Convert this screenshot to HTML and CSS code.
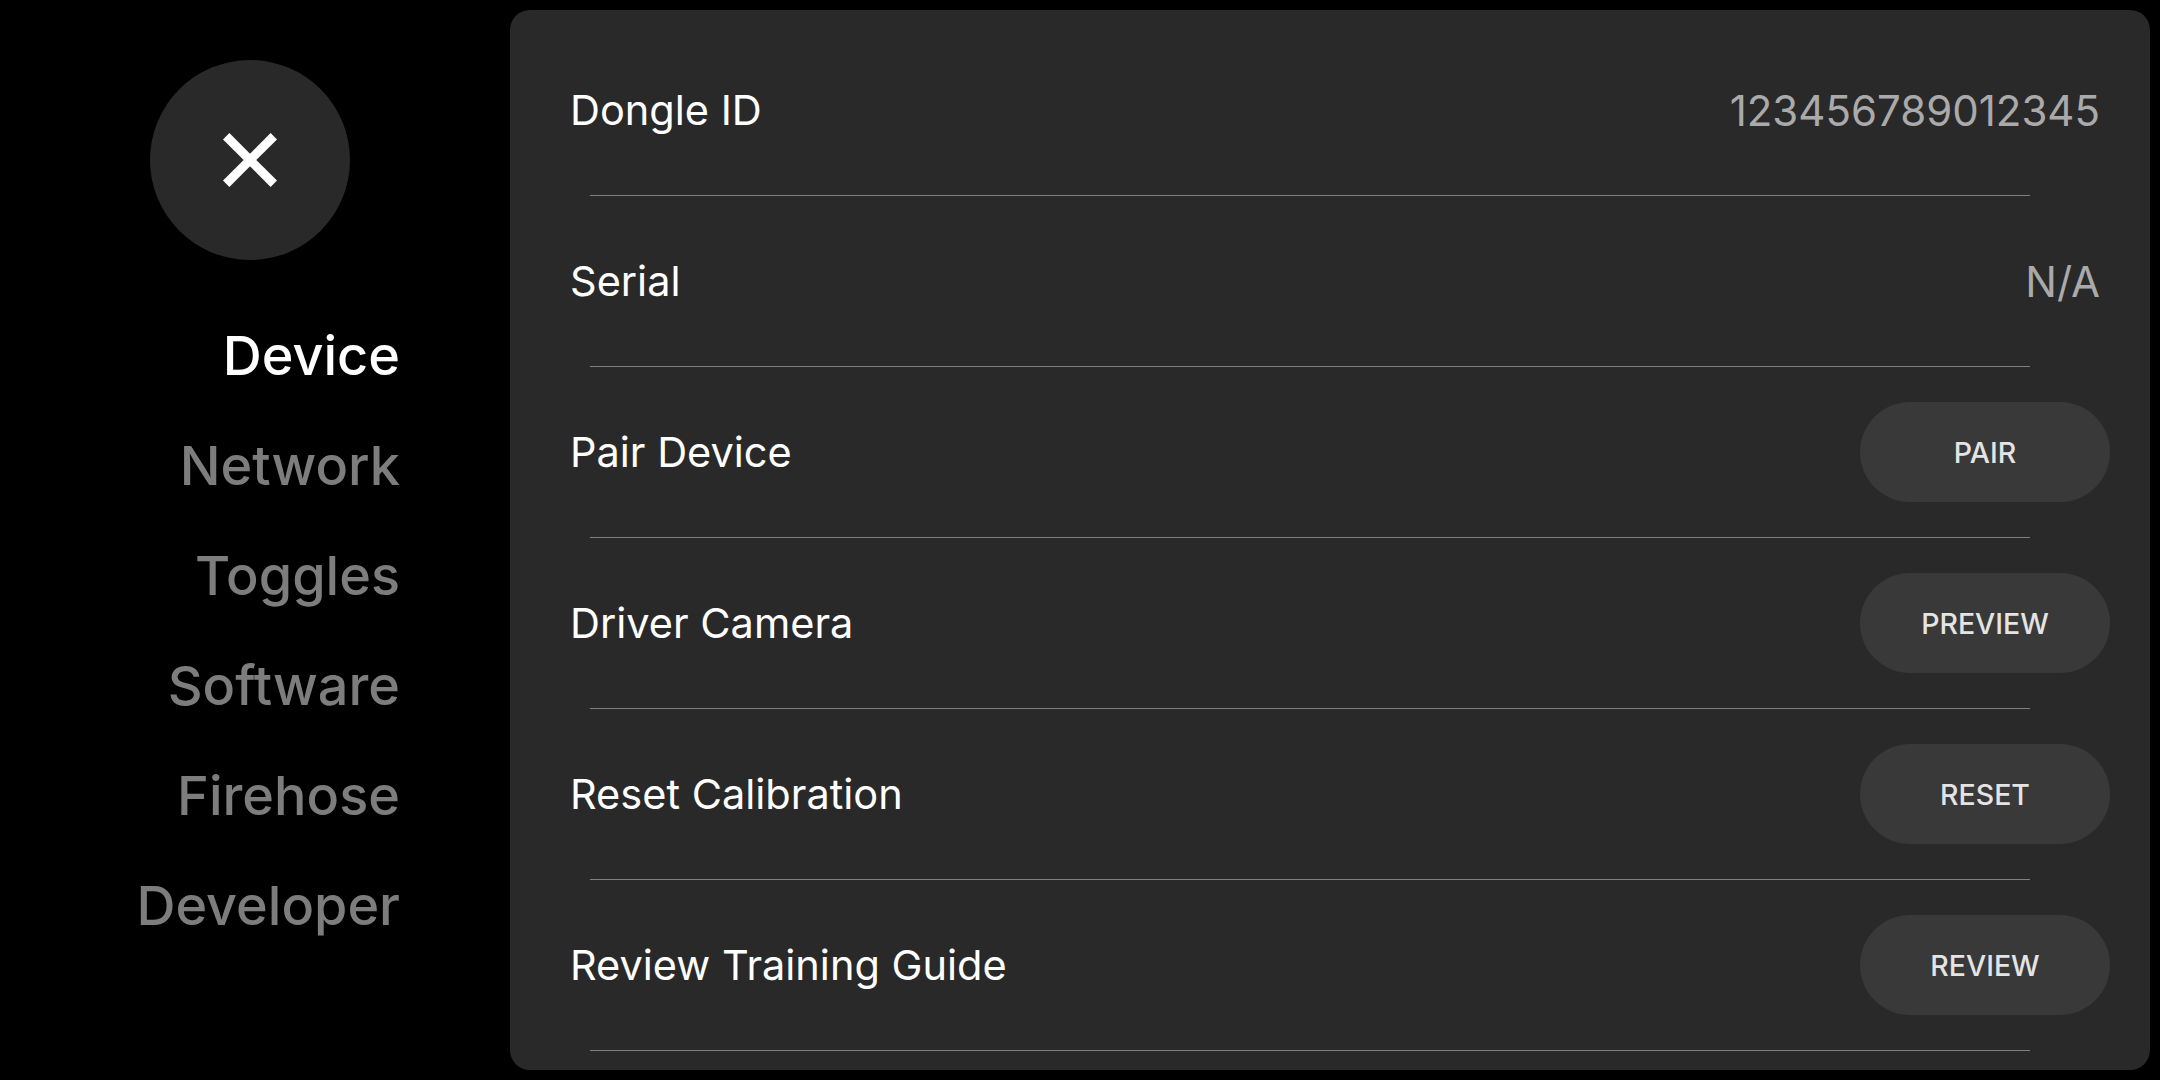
FILE: index.html
```html
<!DOCTYPE html>
<html lang="en">
<head>
<meta charset="utf-8">
<title>Settings</title>
<link rel="stylesheet" href="styles.css">
</head>
<body>
<div class="app">
  <aside class="sidebar">
    <button class="close" aria-label="Close">
      <svg class="close-icon" width="54" height="54" viewBox="0 0 54 54">
        <line x1="3.2" y1="3.2" x2="50.8" y2="50.8" stroke="#fff" stroke-width="9"/>
        <line x1="50.8" y1="3.2" x2="3.2" y2="50.8" stroke="#fff" stroke-width="9"/>
      </svg>
    </button>
    <nav class="nav">
      <div class="nav-item active">Device</div>
      <div class="nav-item">Network</div>
      <div class="nav-item">Toggles</div>
      <div class="nav-item">Software</div>
      <div class="nav-item">Firehose</div>
      <div class="nav-item">Developer</div>
    </nav>
  </aside>
  <main class="panel">
    <div class="row">
      <span class="label">Dongle ID</span>
      <span class="value">123456789012345</span>
    </div>
    <div class="sep"></div>
    <div class="row">
      <span class="label">Serial</span>
      <span class="value">N/A</span>
    </div>
    <div class="sep"></div>
    <div class="row">
      <span class="label">Pair Device</span>
      <button class="btn">PAIR</button>
    </div>
    <div class="sep"></div>
    <div class="row">
      <span class="label">Driver Camera</span>
      <button class="btn">PREVIEW</button>
    </div>
    <div class="sep"></div>
    <div class="row">
      <span class="label">Reset Calibration</span>
      <button class="btn">RESET</button>
    </div>
    <div class="sep"></div>
    <div class="row">
      <span class="label">Review Training Guide</span>
      <button class="btn">REVIEW</button>
    </div>
    <div class="sep"></div>
  </main>
</div>
</body>
</html>
```

FILE: styles.css
```css
* {
  box-sizing: border-box;
}

html, body {
  margin: 0;
  padding: 0;
  background: #000;
}

body {
  font-family: Inter, "Noto Sans", "Liberation Sans", sans-serif;
  color: #fff;
}

.app {
  width: 2160px;
  height: 1080px;
  display: flex;
  overflow: hidden;
}

.sidebar {
  width: 500px;
  flex: none;
  display: flex;
  flex-direction: column;
  padding-top: 60px;
}

.close {
  width: 200px;
  height: 200px;
  border-radius: 50%;
  border: none;
  padding: 0;
  background: #292929;
  align-self: center;
  display: flex;
  align-items: center;
  justify-content: center;
}

.close-icon {
  display: block;
}

.nav {
  margin-top: 40px;
  padding-right: 100px;
  display: flex;
  flex-direction: column;
}

.nav-item {
  height: 110px;
  display: flex;
  align-items: center;
  justify-content: flex-end;
  font-size: 54px;
  font-weight: 500;
  color: #7d7d7d;
}

.nav-item.active {
  color: #fff;
}

.panel {
  flex: 1;
  margin: 10px;
  background: #292929;
  border-radius: 20px;
  padding: 15px 40px 0 60px;
  display: flex;
  flex-direction: column;
  overflow: hidden;
}

.row {
  height: 170px;
  flex: none;
  display: flex;
  align-items: center;
  justify-content: space-between;
}

.label {
  font-size: 41.5px;
  font-weight: 400;
  color: #fff;
}

.value {
  font-size: 42px;
  font-weight: 400;
  color: #aaaaaa;
  margin-right: 10px;
}

.btn {
  width: 250px;
  height: 100px;
  border: none;
  border-radius: 50px;
  background: #393939;
  color: #e4e4e4;
  font-family: Inter, "Noto Sans", "Liberation Sans", sans-serif;
  font-size: 28.5px;
  font-weight: 500;
  padding: 0;
}

.sep {
  height: 1px;
  flex: none;
  background: #808080;
  margin: 0 80px 0 20px;
}
```
